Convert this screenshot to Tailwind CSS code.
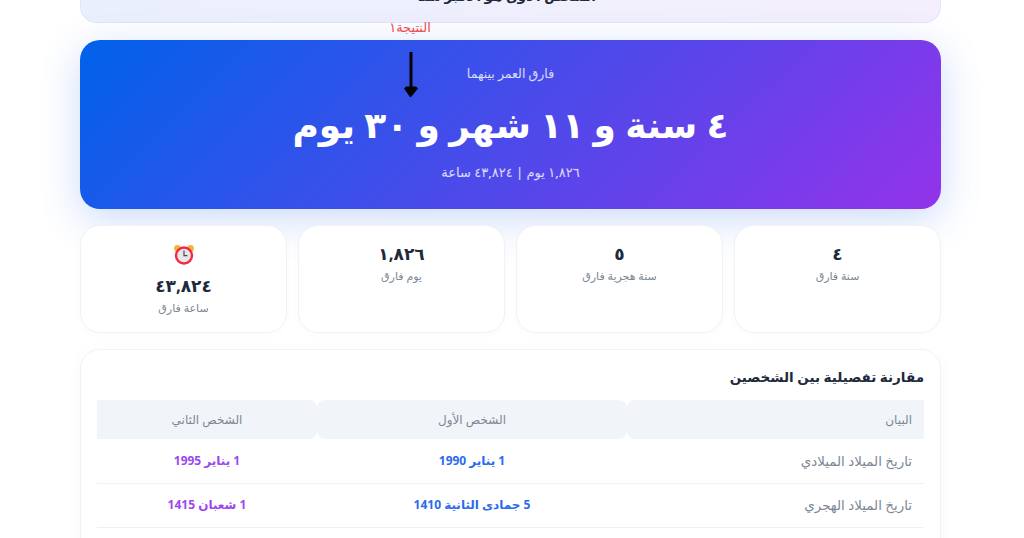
<!DOCTYPE html>
<html lang="ar" dir="rtl">
<head>
<meta charset="utf-8">
<script src="https://cdn.jsdelivr.net/npm/@tailwindcss/browser@4"></script>
</head>
<body class="bg-white font-['Noto_Sans','DejaVu_Sans',sans-serif] h-[538px] w-[1024px] overflow-hidden relative">
<main class="w-[861px] ml-[80px] mr-auto flex flex-col">
  <section class="h-[64px] -mt-[41px] rounded-2xl border border-[#dfe6fb] bg-[linear-gradient(135deg,#eaf0fd_0%,#f5effc_100%)] flex items-end justify-center">
    <p class="text-[13.5px] font-bold text-[#1e293b] leading-[20px] mb-[16px] mr-[8px]">الشخص الأول هو الأكبر سناً</p>
  </section>

  <section class="mt-[17px] h-[169px] rounded-[20px] bg-[linear-gradient(135deg,#0062ea_0%,#9333ea_100%)] shadow-[0_10px_40px_rgba(37,99,235,0.24)] flex flex-col items-center text-white">
    <p class="mt-[24px] text-[12.5px] font-normal leading-[20px] text-white/80">فارق العمر بينهما</p>
    <p class="mt-[11px] text-[36px] font-bold leading-[60px]">٤ سنة و ١١ شهر و ٣٠ يوم</p>
    <p class="mt-[7px] text-[13px] font-medium leading-[21px] text-white/80">١,٨٢٦ يوم | ٤٣,٨٢٤ ساعة</p>
  </section>

  <section class="mt-[16px] grid grid-cols-4 gap-[11px] h-[108px]">
    <div class="rounded-[20px] border border-[#f0f2f5] bg-white flex flex-col items-center pt-[16px] shadow-[0_2px_8px_rgba(15,23,42,0.02)]">
      <p class="text-[17px] font-bold leading-[24px] text-[#1e293b]">٤</p>
      <p class="mt-[1px] text-[11px] leading-[18px] text-[#7b8794]">سنة فارق</p>
    </div>
    <div class="rounded-[20px] border border-[#f0f2f5] bg-white flex flex-col items-center pt-[16px] shadow-[0_2px_8px_rgba(15,23,42,0.02)]">
      <p class="text-[17px] font-bold leading-[24px] text-[#1e293b]">٥</p>
      <p class="mt-[1px] text-[11px] leading-[18px] text-[#7b8794]">سنة هجرية فارق</p>
    </div>
    <div class="rounded-[20px] border border-[#f0f2f5] bg-white flex flex-col items-center pt-[16px] shadow-[0_2px_8px_rgba(15,23,42,0.02)]">
      <p class="text-[17px] font-bold leading-[24px] text-[#1e293b]">١,٨٢٦</p>
      <p class="mt-[1px] text-[11px] leading-[18px] text-[#7b8794]">يوم فارق</p>
    </div>
    <div class="rounded-[20px] border border-[#f0f2f5] bg-white flex flex-col items-center pt-[18px] shadow-[0_2px_8px_rgba(15,23,42,0.02)]">
      <svg class="w-[22px] h-[22px]" viewBox="0 0 22 22">
        <circle cx="4.5" cy="4.5" r="3.4" fill="#f9b233"/>
        <circle cx="17.5" cy="4.5" r="3.4" fill="#f9b233"/>
        <circle cx="11" cy="11.5" r="8" fill="#e9e6e8" stroke="#ee2c4a" stroke-width="2.4"/>
        <path d="M11 6.500v5.200h3.400" fill="none" stroke="#4b4b55" stroke-width="1.2"/>
      </svg>
      <p class="mt-[8px] text-[17px] font-bold leading-[24px] text-[#1e293b]">٤٣,٨٢٤</p>
      <p class="mt-[1px] text-[11px] leading-[18px] text-[#7b8794]">ساعة فارق</p>
    </div>
  </section>

  <section class="mt-[16px] h-[300px] rounded-[20px] border border-[#f0f2f5] bg-white px-[16px] shadow-[0_4px_20px_rgba(15,23,42,0.03)]">
    <h2 class="mt-[15px] text-[13.5px] font-bold leading-[24px] text-[#1e293b]">مقارنة تفصيلية بين الشخصين</h2>
    <table class="mt-[11px] w-[827px] table-fixed border-collapse text-[12px]">
      <thead>
        <tr class="h-[39px] text-[#7b8794] font-medium">
          <th class="w-[297px] bg-[#f1f5f9] rounded-l-lg text-right pr-[12px] font-medium">البيان</th>
          <th class="w-[310px] bg-[#f1f5f9] rounded-lg font-medium">الشخص الأول</th>
          <th class="w-[220px] bg-[#f1f5f9] rounded-r-lg font-medium">الشخص الثاني</th>
        </tr>
      </thead>
      <tbody>
        <tr class="h-[44px] border-b border-[#eef0f3]">
          <td class="pr-[12px] text-[#7b8794] text-[13.4px]">تاريخ الميلاد الميلادي</td>
          <td class="text-center font-bold text-[#2b6bed]">1 يناير 1990</td>
          <td class="text-center font-bold text-[#9d47ee]">1 يناير 1995</td>
        </tr>
        <tr class="h-[44px] border-b border-[#eef0f3]">
          <td class="pr-[12px] text-[#7b8794] text-[13.4px]">تاريخ الميلاد الهجري</td>
          <td class="text-center font-bold text-[#2b6bed]">5 جمادى الثانية 1410</td>
          <td class="text-center font-bold text-[#9d47ee]">1 شعبان 1415</td>
        </tr>
      </tbody>
    </table>
  </section>
</main>

<div class="absolute left-[380px] top-[17px] w-[60px] text-center text-[13px] leading-[20px] text-[#f04b4b]">النتيجة١</div>
<svg class="absolute left-[403px] top-[51px] w-[16px] h-[47px]" viewBox="0 0 16 47">
  <path d="M8 1v36" stroke="#000" stroke-width="3" fill="none"/>
  <path d="M1 37.500l2-2h10l2 2-7 8.500-1 0z" fill="#000"/>
</svg>
</body>
</html>
